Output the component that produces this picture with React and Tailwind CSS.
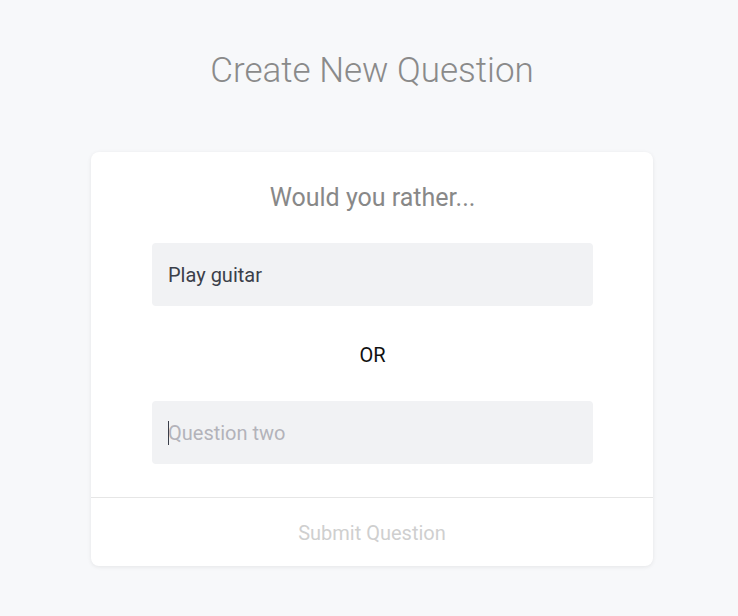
import React from 'react';

export default function App() {
  return (
    <div className="min-h-screen bg-[#f7f8fa] font-['Roboto',sans-serif] pt-[49px] pl-[6px]">
      {/* Page title */}
      <h1 className="text-center text-[35px] leading-[44px] font-light text-[#8a8a8a]">Create New Question</h1>

      {/* Question card */}
      <div className="mx-auto mt-[59px] w-[562px] rounded-lg bg-white shadow-[0_1px_4px_rgba(0,0,0,0.08)]">
        <div className="pl-[61px] pr-[60px] pt-[30px] pb-[33px]">
          <p className="text-center text-[25px] leading-[32px] text-[#888]">Would you rather...</p>

          <input
            type="text"
            defaultValue="Play guitar"
            className="mt-[29px] block h-[63px] w-full rounded-sm bg-[#f1f2f4] px-4 text-[20px] text-[#3b3f4a] outline-none"
          />

          <p className="pt-[37px] pb-[34px] text-center text-[20px] leading-[24px] text-[#111]">OR</p>

          <div className="relative">
            <input
              type="text"
              placeholder="Question two"
              className="block h-[63px] w-full rounded-sm bg-[#f1f2f4] px-4 text-[20px] text-[#3b3f4a] outline-none placeholder:text-[#b3b3ba]"
            />
            {/* focused caret */}
            <span className="pointer-events-none absolute left-[16px] top-[20px] h-[24px] w-px bg-[#3b3f4a]" />
          </div>
        </div>

        <div className="border-t border-[#e6e6e6]">
          <button type="button" className="block w-full pt-[23px] pb-[21px] text-center text-[20px] leading-[24px] text-[#cfcfcf]">
            Submit Question
          </button>
        </div>
      </div>
    </div>
  );
}
